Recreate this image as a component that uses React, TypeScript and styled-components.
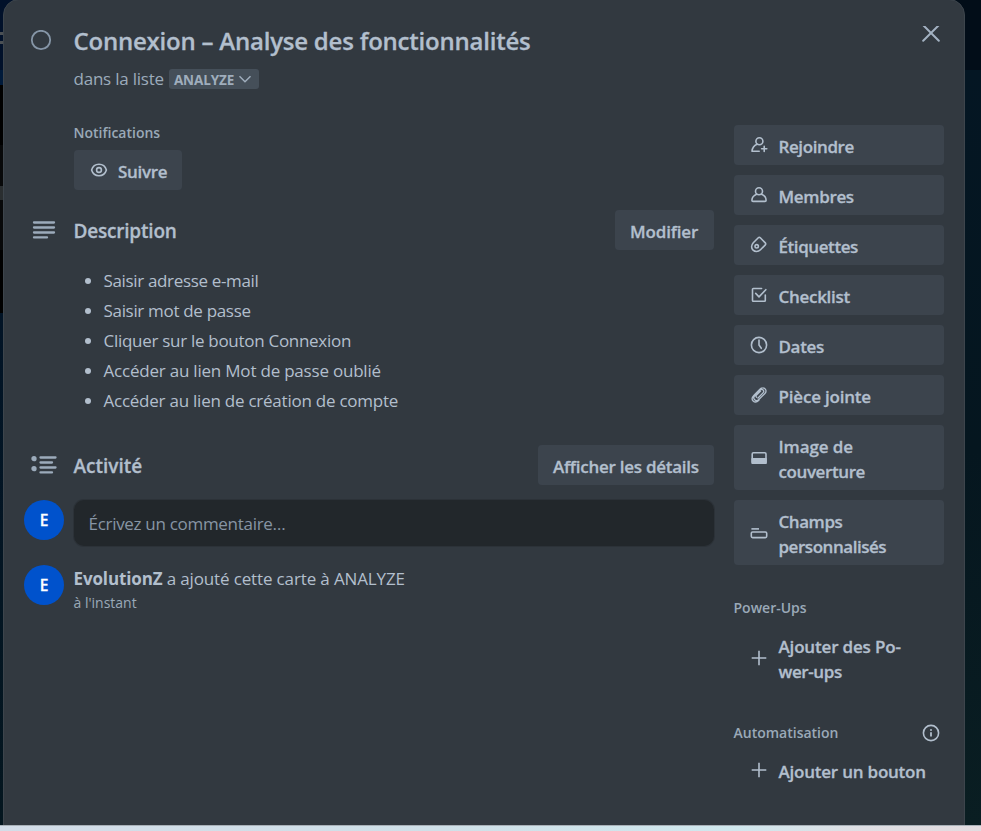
import React from "react";
import styled, { createGlobalStyle, css } from "styled-components";

const color = {
  surface: "#323940",
  button: "#3c444d",
  text: "#b2bfcd",
  muted: "#9cabbb",
  label: "#9aa9b8",
};

const GlobalStyle = createGlobalStyle`
  *, *::before, *::after { box-sizing: border-box; }
  body {
    margin: 0;
    overflow: hidden;
    font-family: "Open Sans", "Noto Sans", sans-serif;
    color: ${color.text};
  }
`;

const Screen = styled.div`
  display: flex;
  flex-direction: column;
  width: 981px;
  height: 831px;
  overflow: hidden;
`;

const Backdrop = styled.div`
  flex: 0 0 825px;
  display: flex;
  padding-left: 3px;
  overflow: hidden;
  background:
    linear-gradient(#4b5054, #4b5054) 0 32px / 3px 3px no-repeat,
    linear-gradient(#4b5054, #4b5054) 0 41px / 3px 3px no-repeat,
    linear-gradient(#2a2e30, #2a2e30) 0 186px / 3px 14px no-repeat,
    linear-gradient(#01112a 0 70px, #001a3a 70px 85px, #000 85px 145px, #08090a 145px 250px, #000 250px 313px, #021426 313px, #04161f 825px) 0 0 / 20px 825px no-repeat,
    linear-gradient(#020d18 0 70px, #041623 70px, #05161f 450px, #0a1e22 825px);
`;

const Taskbar = styled.div`
  flex: 1;
  border-top: 1px solid #a9b1b8;
  background: linear-gradient(90deg, #d3dde8, #cfe0e8 45%, #d0e8ee 75%, #dfdfe4 88%, #e2dce0);
`;

const Dialog = styled.div`
  width: 962px;
  height: 860px;
  margin-top: -1px;
  padding: 26px 20px 0;
  border: 1px solid #3d454c;
  border-radius: 16px;
  background: ${color.surface};
`;

const Header = styled.header`
  display: grid;
  grid-template-columns: 40px 1fr 20px;
  column-gap: 9.5px;
  height: 66px;
  padding-right: 3px;
`;

const Track = css<{ $track?: number }>`
  letter-spacing: ${({ $track = 0 }) => $track}px;
`;

const Sturdy = css`
  font-weight: 600;
  -webkit-text-stroke: 0.3px currentColor;
`;

const Title = styled.h1`
  margin: 0;
  font-size: 24px;
  line-height: 30px;
  letter-spacing: -0.22px;
  white-space: nowrap;
  ${Sturdy}
`;

const ListLine = styled.div`
  display: flex;
  align-items: center;
  gap: 5px;
  margin-top: 9px;
  font-size: 17px;
  line-height: 26px;
  letter-spacing: -0.22px;
  color: ${color.muted};
`;

const ListName = styled.span`
  padding-top: 1px;
  margin-bottom: -1px;
`;

const ListTag = styled.button`
  display: flex;
  align-items: center;
  gap: 4px;
  width: 90px;
  height: 20px;
  margin-top: 2px;
  padding: 2px 0 0 5px;
  border: 0;
  border-radius: 3px;
  background: #454f59;
  color: #9fadbc;
  font: 700 13.5px/18px "Open Sans", sans-serif;
  letter-spacing: -0.1px;
  svg { margin-top: -2px; }
`;

const Columns = styled.div`
  display: grid;
  grid-template-columns: 690px 210px;
  column-gap: 20px;
  padding-top: 30px;
`;

const Main = styled.main`
  display: flex;
  flex-direction: column;
`;

const Row = styled.div`
  display: grid;
  grid-template-columns: 40px 1fr;
  column-gap: 10px;
`;

const HeadingRow = styled.div`
  display: grid;
  grid-template-columns: 40px 1fr auto;
  column-gap: 9.5px;
  align-items: center;
  height: 40px;
`;

const IconCell = styled.span<{ $top?: number }>`
  display: flex;
  justify-content: center;
  padding-top: ${({ $top = 0 }) => $top}px;
  color: ${color.muted};
`;

const Heading = styled.h2<{ $track?: number }>`
  margin: 0;
  padding-top: 3.5px;
  font-size: 19px;
  line-height: 25px;
  ${Sturdy}
  ${Track}
`;

const Label = styled.h3`
  margin: 0;
  font-size: 14px;
  font-weight: 600;
  line-height: 20px;
  color: ${color.label};
`;

const Notifications = styled.section`
  padding: 0 0 20px 49.5px;
  margin-top: 1px;
  ${Label} { margin-bottom: 7px; }
`;

const Button = styled.button<{ $track?: number; $width?: number; $plain?: boolean }>`
  display: flex;
  align-items: center;
  gap: 9.5px;
  width: ${({ $width }) => ($width ? `${$width}px` : "100%")};
  min-height: 40px;
  padding: 7.5px 15px;
  border: 0;
  border-radius: 4px;
  background: ${({ $plain }) => ($plain ? "transparent" : color.button)};
  color: ${color.text};
  font: 600 17px/25px "Open Sans", sans-serif;
  text-align: left;
  white-space: nowrap;
  ${Sturdy}
  ${Track}
  svg { flex: none; }
`;

const Caption = styled.span`
  padding-top: 1px;
  margin-bottom: -1px;
`;

const CaptionLine = styled.span<{ $track?: number }>`
  display: block;
  ${Track}
`;

const Bullets = styled.ul`
  display: flex;
  flex-direction: column;
  gap: 5px;
  margin: 18px 0 32px;
  padding-left: 79.5px;
  font-size: 17px;
  line-height: 25px;
`;

const Bullet = styled.li<{ $track?: number }>`
  ${Track}
`;

const Avatar = styled.span`
  display: flex;
  align-items: center;
  justify-content: center;
  width: 40px;
  height: 40px;
  border-radius: 50%;
  background: #0052cc;
  color: #fff;
  font-size: 15.5px;
  ${Sturdy}
`;

const CommentRow = styled(Row)`
  margin: 15px 0 19px;
`;

const Comment = styled.div`
  height: 46px;
  padding: 2px 15px 0 14.5px;
  border-radius: 10px;
  background: #22272b;
  box-shadow: 0 0 0 1px #2c3238;
  color: #8795a4;
  font-size: 17px;
  line-height: 44px;
  letter-spacing: -0.3px;
`;

const Event = styled.div`
  font-size: 17px;
  line-height: 25px;
  letter-spacing: -0.14px;
  padding-top: 1px;
  margin-left: -0.5px;
  strong { letter-spacing: -0.13px; }
`;

const Time = styled.div`
  padding-top: 1px;
  font-size: 14px;
  line-height: 22px;
  letter-spacing: 0;
  color: ${color.label};
`;

const Sidebar = styled.aside`
  display: flex;
  flex-direction: column;
  gap: 10px;
  padding-top: 3px;
`;

const SidebarHeading = styled.div<{ $top: number }>`
  display: flex;
  align-items: center;
  justify-content: space-between;
  height: 20px;
  padding-right: 3px;
  margin: ${({ $top }) => $top}px 0 -3px -0.5px;
`;

type Shape = { size?: number; children: React.ReactNode; width?: number };

const Glyph = ({ size = 20, width = 1.6, children }: Shape) => (
  <svg width={size} height={size} viewBox="0 0 20 20" fill="none" stroke="currentColor" strokeWidth={width} strokeLinecap="round" strokeLinejoin="round">
    {children}
  </svg>
);

const icons = {
  join: (
    <>
      <circle cx="10.4" cy="6.3" r="3.5" />
      <path d="M8 9.3C5 10.5 3.3 12.6 3 16.3h7.2" />
      <path d="M15.2 11.2v5.2M12.6 13.8h5.2" />
    </>
  ),
  member: (
    <>
      <circle cx="10" cy="6.3" r="3.5" />
      <path d="M7.6 9.2C4.7 10.3 3 12.4 2.9 15.2c0 .8.4 1.2 1.1 1.2h12c.7 0 1.1-.4 1.1-1.2-.1-2.8-1.8-4.9-4.7-6" />
    </>
  ),
  label: (
    <>
      <path d="M9.3 2.8a1.4 1.4 0 0 1 2 0l5 5.1a1.4 1.4 0 0 1 0 2l-4.8 4.9c-1.2 1.2-2.3 1.7-4 1.7-2.6 0-4.9-1.9-4.9-4.7 0-1.7.6-2.8 1.7-4z" />
      <circle cx="7.7" cy="11.3" r="1.7" />
    </>
  ),
  checklist: (
    <>
      <path d="M12.6 3.5H4.3a.8.8 0 0 0-.8.8v11.2c0 .5.3.8.8.8h11.2c.5 0 .8-.3.8-.8V10" />
      <path d="M6.7 8.4l3.3 3.5 6.8-7.2" />
    </>
  ),
  dates: (
    <>
      <circle cx="10" cy="10" r="7.6" />
      <path d="M10 5v5l2.3 3.3" />
    </>
  ),
  attachment: (
    <path d="M9 13l5-5.1c2-2.1-.7-4.8-2.8-2.8l-5.3 5.4c-3 3.1 1 7 4 4l5.8-5.8M7.6 12.2c-1.1-.9-.5-1.6 0-2.1l4-4M15.9 8.5c2.3-2.3.6-5.7-2.2-5.6-1.1 0-2 .5-2.8 1.3L5 10.1c-4.5 4.6.6 9.3 4.9 5.2" strokeWidth="1.3" />
  ),
  cover: (
    <>
      <rect x="3.2" y="4.7" width="13.8" height="10.6" rx="1.2" />
      <path d="M3.2 10.8H17v4.5H3.2z" fill="currentColor" />
    </>
  ),
  fields: (
    <>
      <path d="M2.4 5.9h7.6" strokeLinecap="butt" />
      <rect x="2.3" y="9" width="15.4" height="5.6" rx="1.3" />
    </>
  ),
  plus: <path d="M10 2.7v14.600M2.700 10h14.600" strokeLinecap="butt" />,
  eye: (
    <>
      <path d="M2.6 10C3.7 6.3 6.5 4.3 10 4.3s6.3 2 7.4 5.7c-1.1 3.7-3.9 5.7-7.4 5.7S3.7 13.7 2.6 10z" />
      <circle cx="10" cy="10" r="2.4" />
    </>
  ),
};

type IconName = keyof typeof icons;

type Action = { icon: IconName; lines: [string, number][]; plain?: boolean };

const actions: Action[] = [
  { icon: "join", lines: [["Rejoindre", -0.4]] },
  { icon: "member", lines: [["Membres", -0.34]] },
  { icon: "label", lines: [["Étiquettes", -0.42]] },
  { icon: "checklist", lines: [["Checklist", -0.29]] },
  { icon: "dates", lines: [["Dates", -0.34]] },
  { icon: "attachment", lines: [["Pièce jointe", -0.2]] },
  { icon: "cover", lines: [["Image de", -0.1], ["couverture", -0.4]] },
  { icon: "fields", lines: [["Champs", -0.44], ["personnalisés", -0.46]] },
];

const description: [string, number][] = [
  ["Saisir adresse e-mail", -0.34],
  ["Saisir mot de passe", -0.32],
  ["Cliquer sur le bouton Connexion", -0.29],
  ["Accéder au lien Mot de passe oublié", -0.21],
  ["Accéder au lien de création de compte", -0.24],
];

const ActionButton = ({ icon, lines, plain }: Action) => (
  <Button $plain={plain}>
    <Glyph>{icons[icon]}</Glyph>
    <Caption>
      {lines.map(([text, track]) => (
        <CaptionLine key={text} $track={track}>{text}</CaptionLine>
      ))}
    </Caption>
  </Button>
);

export default function App() {
  return (
    <Screen>
      <GlobalStyle />
      <Backdrop>
        <Dialog>
          <Header>
            <IconCell $top={4}>
              <svg width="34" height="22" viewBox="0 0 34 22" fill="none" stroke="#8696a7" strokeWidth="1.8">
                <circle cx="14" cy="10" r="9.2" />
              </svg>
            </IconCell>
            <div>
              <Title>Connexion – Analyse des fonctionnalités</Title>
              <ListLine>
                <ListName>dans la liste</ListName>
                <ListTag>
                  ANALYZE
                  <svg width="14" height="14" viewBox="0 0 14 14" fill="none" stroke="currentColor" strokeWidth="1.5">
                    <path d="M1.5 4.2l5.5 5.5 5.5-5.5" />
                  </svg>
                </ListTag>
              </ListLine>
            </div>
            <IconCell $top={-2}>
              <svg width="20" height="20" viewBox="0 0 20 20" fill="none" stroke="#a3b2c2" strokeWidth="2" strokeLinecap="round">
                <path d="M2.2 -0.8l15.6 15.6M17.8 -0.8l-15.6 15.6" overflow="visible" />
              </svg>
            </IconCell>
          </Header>
          <Columns>
            <Main>
              <Notifications>
                <Label>Notifications</Label>
                <Button $width={108} $track={-0.32}>
                  <Glyph>{icons.eye}</Glyph>
                  <Caption>Suivre</Caption>
                </Button>
              </Notifications>

              <HeadingRow>
                <IconCell>
                  <svg width="24" height="20" viewBox="0 0 24 20" stroke="currentColor" strokeWidth="2.3" strokeLinecap="round">
                    <path d="M2 2.5h20M2 7.5h20M2 12.5h20M2 17.4h13" />
                  </svg>
                </IconCell>
                <Heading $track={-0.2}>Description</Heading>
                <Button $width={99} $track={-0.15}>
                  <Caption>Modifier</Caption>
                </Button>
              </HeadingRow>
              <Bullets>
                {description.map(([text, track]) => (
                  <Bullet key={text} $track={track}>{text}</Bullet>
                ))}
              </Bullets>

              <HeadingRow>
                <IconCell>
                  <svg width="26" height="20" viewBox="0 0 26 20" fill="currentColor" stroke="currentColor" strokeWidth="2.3" strokeLinecap="round">
                    <path d="M9.5 2.5h15M9.5 7.5h11.5M9.5 12.5h15M9.5 17.4h11.5" />
                    <circle cx="3" cy="3.7" r="1.5" />
                    <circle cx="3" cy="13.7" r="1.5" />
                  </svg>
                </IconCell>
                <Heading $track={0}>Activité</Heading>
                <Button $width={176} $track={-0.26}>
                  <Caption>Afficher les détails</Caption>
                </Button>
              </HeadingRow>
              <CommentRow>
                <Avatar>E</Avatar>
                <Comment>Écrivez un commentaire…</Comment>
              </CommentRow>
              <Row>
                <Avatar>E</Avatar>
                <Event>
                  <strong>EvolutionZ</strong> a ajouté cette carte à ANALYZE
                  <Time>à l'instant</Time>
                </Event>
              </Row>
            </Main>

            <Sidebar>
              {actions.map((action) => (
                <ActionButton key={action.icon} {...action} />
              ))}
              <SidebarHeading $top={23}>
                <Label>Power-Ups</Label>
              </SidebarHeading>
              <ActionButton plain icon="plus" lines={[["Ajouter des Po-", -0.17], ["wer-ups", -0.4]]} />
              <SidebarHeading $top={23}>
                <Label>Automatisation</Label>
                <Glyph>
                  <circle cx="10" cy="10" r="7.6" />
                  <path d="M10 9.3v4.2" strokeWidth="1.8" strokeLinecap="butt" />
                  <circle cx="10" cy="6.9" r="1" fill="currentColor" stroke="none" />
                </Glyph>
              </SidebarHeading>
              <ActionButton plain icon="plus" lines={[["Ajouter un bouton", -0.22]]} />
            </Sidebar>
          </Columns>
        </Dialog>
      </Backdrop>
      <Taskbar />
    </Screen>
  );
}
